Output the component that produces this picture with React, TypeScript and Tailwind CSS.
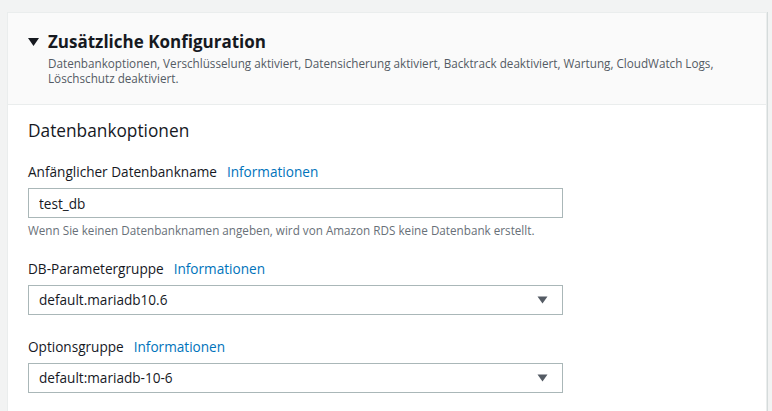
import { useState } from "react";

const font = { fontFamily: '"Open Sans", "Liberation Sans", sans-serif' };

function Label({ text }: { text: string }) {
  return (
    <div className="flex items-center gap-[10px] text-[13.6px] leading-[22px] text-[#16191f]">
      <span>{text}</span>
      <a href="#" className="text-[#0073bb]">Informationen</a>
    </div>
  );
}

function SelectBox({ value }: { value: string }) {
  return (
    <div className="mt-[5px] flex h-[30px] w-[535px] items-center justify-between border border-[#aab7b8] bg-white pl-[10px] pr-[14px] text-[13.6px] text-[#16191f]">
      <span>{value}</span>
      <svg width="11" height="8" viewBox="0 0 11 8">
        <path d="M0.5 0.5h10L5.5 7.5z" fill="#545b64" />
      </svg>
    </div>
  );
}

export default function App() {
  const [name, setName] = useState("test_db");

  return (
    <div className="h-[411px] w-[772px] overflow-hidden bg-[#f2f3f3] pl-[7px] pt-[12px]" style={font}>
      <div className="h-[420px] w-[760px] border border-[#eaeded] bg-white shadow-[1px_0_0_#d5dbdb]">
        {/* Header */}
        <div className="border-b border-[#eaeded] bg-[#fafafa] pb-[18px] pl-[20px] pt-[17px]">
          <div className="flex items-center gap-[9px]">
            <svg width="11" height="8" viewBox="0 0 11 8">
              <path d="M0 0h11L5.5 8z" fill="#16191f" />
            </svg>
            <h2 className="text-[17px] font-bold leading-[24px] text-[#16191f]">Zusätzliche Konfiguration</h2>
          </div>
          <p className="mt-[2px] pl-[20px] pr-[30px] text-[11.7px] leading-[15px] text-[#545b64]">
            Datenbankoptionen, Verschlüsselung aktiviert, Datensicherung aktiviert, Backtrack deaktiviert, Wartung, CloudWatch Logs, Löschschutz deaktiviert.
          </p>
        </div>

        {/* Body */}
        <div className="px-[20px] pt-[14px]">
          <h3 className="text-[17.3px] leading-[24px] text-[#16191f]">Datenbankoptionen</h3>

          <div className="mt-[18px]">
            <Label text="Anfänglicher Datenbankname" />
            <input
              value={name}
              onChange={(e) => setName(e.target.value)}
              className="mt-[5px] block h-[30px] w-[535px] border border-[#aab7b8] bg-white px-[10px] text-[13.6px] text-[#16191f] outline-none"
            />
            <p className="mt-[4px] text-[11.7px] leading-[16px] text-[#687078]">
              Wenn Sie keinen Datenbanknamen angeben, wird von Amazon RDS keine Datenbank erstellt.
            </p>
          </div>

          <div className="mt-[20px]">
            <Label text="DB-Parametergruppe" />
            <SelectBox value="default.mariadb10.6" />
          </div>

          <div className="mt-[21px]">
            <Label text="Optionsgruppe" />
            <SelectBox value="default:mariadb-10-6" />
          </div>
        </div>
      </div>
    </div>
  );
}
